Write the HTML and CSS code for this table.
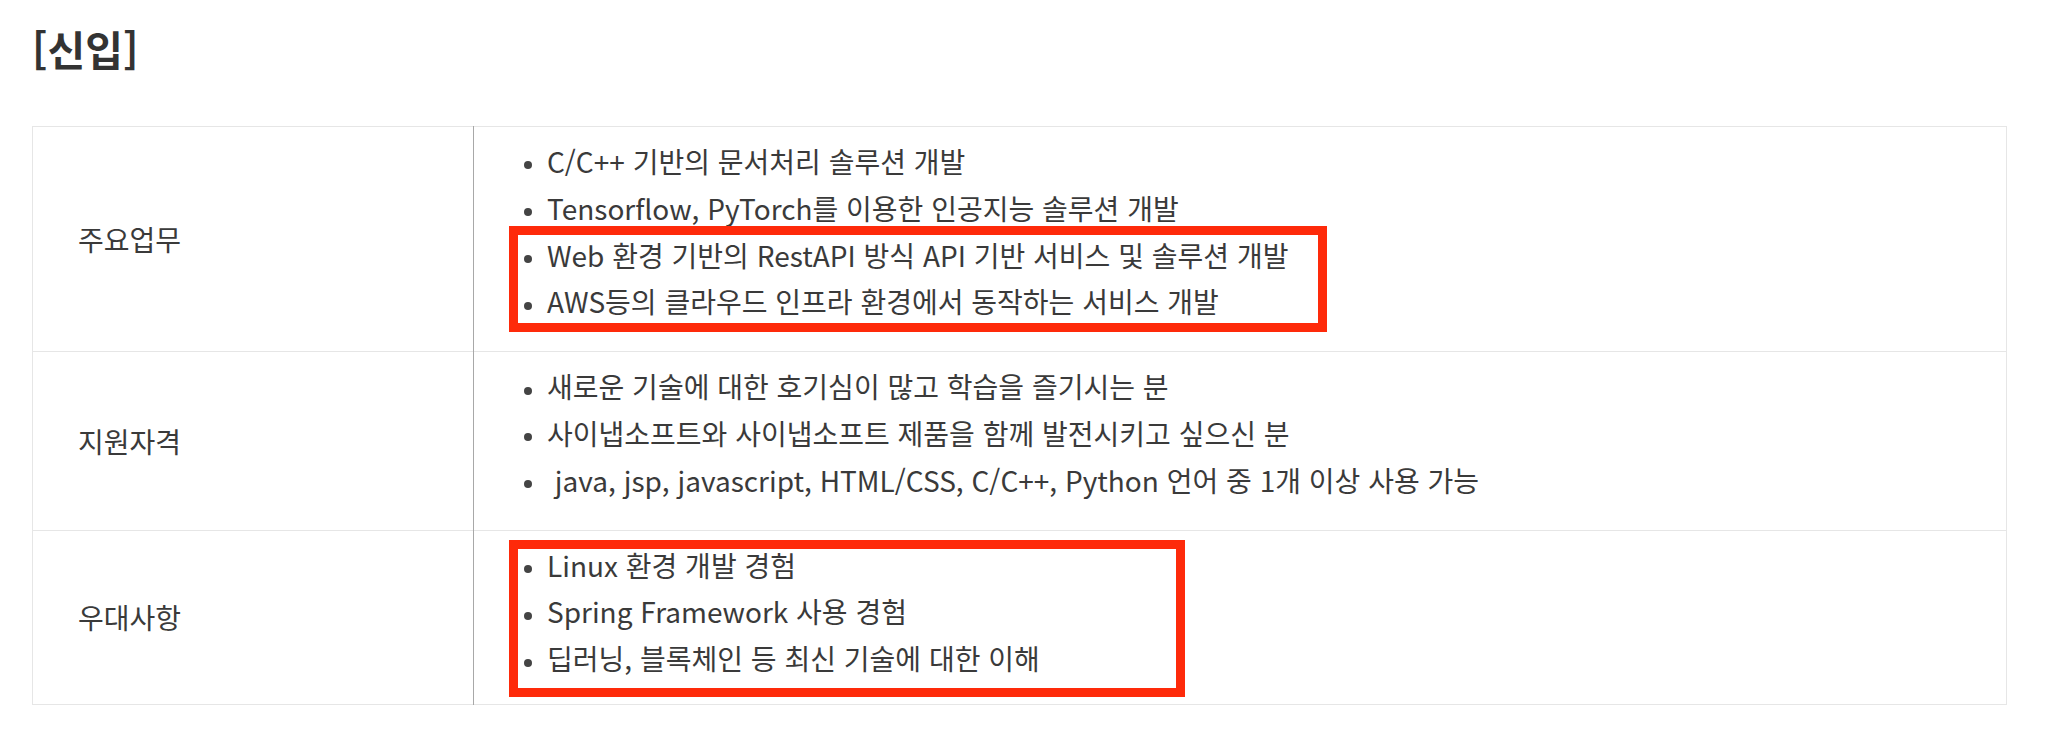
FILE: index.html
```html
<!DOCTYPE html>
<html lang="ko">
<head>
<meta charset="utf-8">
<title>신입 채용</title>
<link rel="stylesheet" href="styles.css">
</head>
<body>
<div class="page">
  <h2 class="title">[신입]</h2>
  <table class="job">
    <tbody>
      <tr>
        <th class="label">주요업무</th>
        <td class="detail">
          <ul class="items">
            <li>C/C++ 기반의 문서처리 솔루션 개발</li>
            <li>Tensorflow, PyTorch를 이용한 인공지능 솔루션 개발</li>
          </ul>
          <ul class="items hl hl-duty">
            <li>Web 환경 기반의 RestAPI 방식 API 기반 서비스 및 솔루션 개발</li>
            <li>AWS등의 클라우드 인프라 환경에서 동작하는 서비스 개발</li>
          </ul>
        </td>
      </tr>
      <tr>
        <th class="label">지원자격</th>
        <td class="detail">
          <ul class="items">
            <li>새로운 기술에 대한 호기심이 많고 학습을 즐기시는 분</li>
            <li>사이냅소프트와 사이냅소프트 제품을 함께 발전시키고 싶으신 분</li>
            <li>&nbsp;java, jsp, javascript, HTML/CSS, C/C++, Python 언어 중 1개 이상 사용 가능</li>
          </ul>
        </td>
      </tr>
      <tr>
        <th class="label">우대사항</th>
        <td class="detail detail-last">
          <ul class="items hl hl-pref">
            <li>Linux 환경 개발 경험</li>
            <li>Spring Framework 사용 경험</li>
            <li>딥러닝, 블록체인 등 최신 기술에 대한 이해</li>
          </ul>
        </td>
      </tr>
    </tbody>
  </table>
</div>
</body>
</html>
```

FILE: styles.css
```css
html, body {
  margin: 0;
  padding: 0;
  background: #ffffff;
}

body {
  font-family: "Noto Sans CJK KR", "Noto Sans", sans-serif;
  color: #3a3a3a;
}

.page {
  padding: 20px 32px 0 32px;
}

.title {
  margin: 0;
  font-size: 41px;
  line-height: 56px;
  font-weight: 700;
  color: #333333;
}

.job {
  margin-top: 50px;
  width: 1975px;
  border-collapse: collapse;
  border: 1px solid #e6e6e6;
}

.job tr {
  border-top: 1px solid #e6e6e6;
}

.label {
  width: 395px;
  padding: 0 0 0 45px;
  text-align: left;
  vertical-align: middle;
  font-weight: 400;
  font-size: 28px;
  color: #3a3a3a;
  border-right: 1px solid #a8a8a8;
}

.detail {
  padding: 11px 0 26px 50px;
  vertical-align: top;
  font-size: 28px;
  line-height: 46.8px;
}

.detail-last {
  padding-bottom: 22px;
}

.items {
  list-style: none;
  margin: 0;
  padding: 0;
}

.items li {
  white-space: nowrap;
}

.items li::before {
  content: "";
  display: inline-block;
  width: 8px;
  height: 8px;
  border-radius: 50%;
  background: #444444;
  vertical-align: middle;
  margin-right: 15px;
}

.hl {
  position: relative;
}

.hl::after {
  content: "";
  position: absolute;
  left: -15px;
  box-sizing: border-box;
  border: 9px solid #fe2a0a;
  pointer-events: none;
}

.hl-duty::after {
  top: -6px;
  bottom: -7px;
  width: 818px;
}

.hl-pref::after {
  top: -2px;
  bottom: -15px;
  width: 676px;
}
```
